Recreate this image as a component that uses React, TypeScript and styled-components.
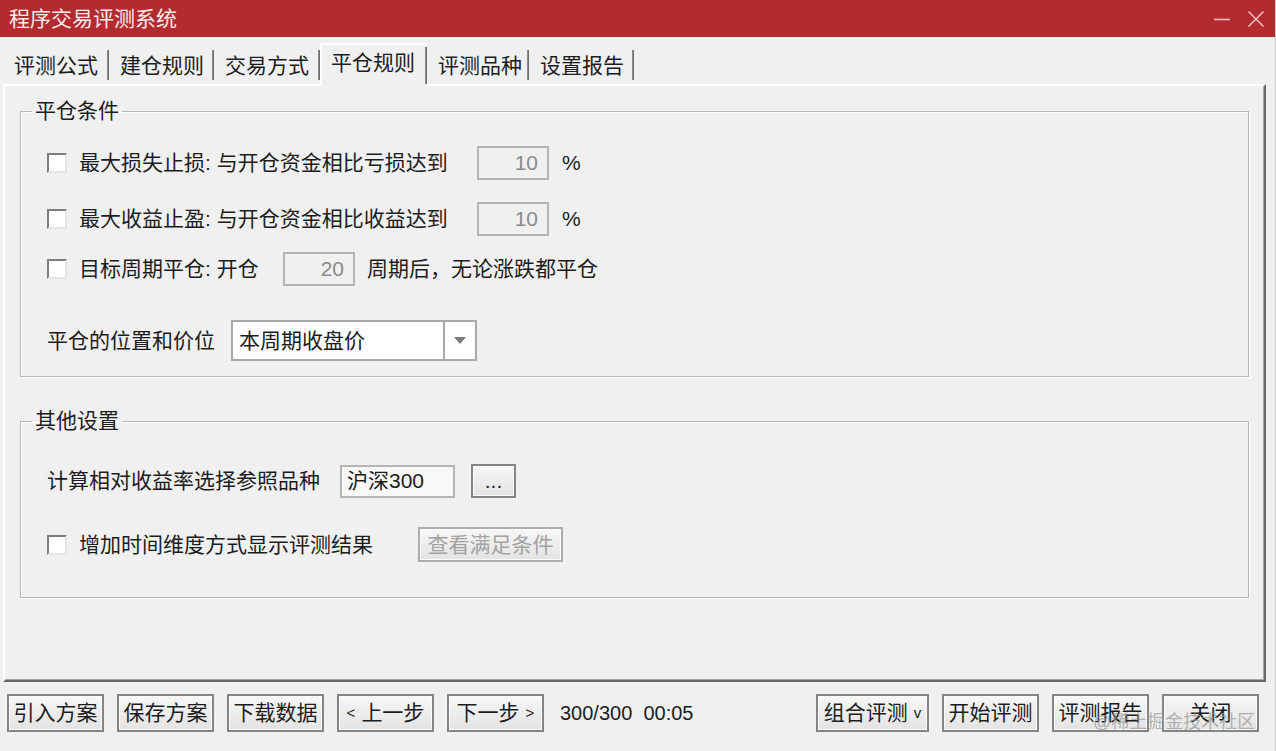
import React from "react";
import styled, { createGlobalStyle } from "styled-components";

const FONT = `"Liberation Sans", "Noto Sans CJK SC", sans-serif`;

const Global = createGlobalStyle`
  html, body { margin: 0; padding: 0; background: #f0f0f0; overflow: hidden; }
  body { font-family: ${FONT}; }
  * { box-sizing: border-box; }
`;

const Window = styled.div`
  position: relative;
  width: 1276px;
  height: 751px;
  display: flex;
  flex-direction: column;
  background: #f0f0f0;
  font-family: ${FONT};
  font-size: 21px;
  line-height: 24px;
  color: #1c1c1c;
  border-right: 1px solid #c9c9c9;
  overflow: hidden;
`;

const TitleBar = styled.div`
  flex: none;
  height: 37px;
  display: flex;
  align-items: center;
  padding: 0 2px 0 9px;
  background: #b32b2f;
`;

const Title = styled.div`
  flex: 1;
  color: #fbeaea;
  font-size: 21px;
  line-height: 24px;
`;

const CaptionButton = styled.div`
  width: 34px;
  height: 37px;
  display: flex;
  align-items: center;
  justify-content: center;
`;

const TabStrip = styled.div`
  flex: none;
  height: 47px;
  display: flex;
  align-items: flex-end;
  padding-left: 3px;
  position: relative;
  z-index: 1;
`;

const Tab = styled.div<{ $w: number; $active?: boolean }>`
  width: ${(p) => p.$w}px;
  height: ${(p) => (p.$active ? 43 : 37)}px;
  margin-bottom: ${(p) => (p.$active ? -2 : 0)}px;
  padding: ${(p) => (p.$active ? "0 0 6px 9px" : "0 0 0 11px")};
  display: flex;
  align-items: center;
  white-space: nowrap;
  background: #f0f0f0;
  border-top: ${(p) => (p.$active ? "2px solid #ffffff" : "none")};
  border-left: ${(p) => (p.$active ? "2px solid #ffffff" : "none")};
  position: relative;
  &::after {
    content: "";
    position: absolute;
    right: 0;
    top: ${(p) => (p.$active ? 2 : 3)}px;
    bottom: ${(p) => (p.$active ? 2 : 4)}px;
    width: 2px;
    background: linear-gradient(to right, #9a9a9a, #5f5f5f);
  }
`;

const TabPanel = styled.div`
  flex: none;
  height: 598px;
  margin: 0 9px 0 3px;
  padding: 13px 15px 0 15px;
  border-top: 2px solid #ffffff;
  border-left: 2px solid #ffffff;
  border-right: 2px solid #6a6a6a;
  border-bottom: 2px solid #6a6a6a;
  box-shadow: inset -1px -1px 0 #a5a5a5;
  display: flex;
  flex-direction: column;
`;

const Group = styled.fieldset<{ $gap?: number; $pb: number }>`
  margin: ${(p) => p.$gap ?? 0}px 0 0 0;
  padding: 0 0 ${(p) => p.$pb}px 26px;
  border: 1px solid #b5b5b5;
  box-shadow: inset 1px 1px 0 #ffffff, 1px 1px 0 #ffffff;
  min-width: 0;
`;

const Legend = styled.legend`
  margin-left: -15px;
  padding: 0 3px;
  font-size: 21px;
  line-height: 24px;
`;

const Row = styled.div<{ $mt: number; $h: number }>`
  margin-top: ${(p) => p.$mt}px;
  height: ${(p) => p.$h}px;
  display: flex;
  align-items: center;
  white-space: nowrap;
`;

const CheckBox = styled.span`
  flex: none;
  width: 20px;
  height: 20px;
  margin-right: 12px;
  background: #ffffff;
  border-style: solid;
  border-width: 2px;
  border-color: #7d7d7d #e4e4e4 #e4e4e4 #7d7d7d;
`;

const Label = styled.span<{ $w?: number }>`
  flex: none;
  width: ${(p) => (p.$w ? `${p.$w}px` : "auto")};
`;

const NumBox = styled.div`
  flex: none;
  width: 72px;
  height: 34px;
  padding-right: 9px;
  display: flex;
  align-items: center;
  justify-content: flex-end;
  background: #f0f0f0;
  border: 2px solid #b4b4b4;
  color: #8a8a8a;
`;

const Unit = styled.span<{ $ml: number }>`
  margin-left: ${(p) => p.$ml}px;
`;

const Select = styled.div`
  flex: none;
  width: 246px;
  height: 41px;
  display: flex;
  background: #ffffff;
  border: 2px solid #a9a9a9;
`;

const SelectValue = styled.div`
  flex: 1;
  padding-left: 6px;
  display: flex;
  align-items: center;
`;

const SelectArrow = styled.div`
  flex: none;
  width: 32px;
  display: flex;
  align-items: center;
  justify-content: center;
  border-left: 2px solid #a9a9a9;
`;

const TextBox = styled.div`
  flex: none;
  width: 115px;
  height: 33px;
  padding-left: 5px;
  display: flex;
  align-items: center;
  background: #f8f8f8;
  border: 2px solid #b4b4b4;
`;

const Button = styled.div<{ $w: number; $h?: number; $ml?: number; $disabled?: boolean }>`
  flex: none;
  width: ${(p) => p.$w}px;
  height: ${(p) => p.$h ?? 38}px;
  margin-left: ${(p) => p.$ml ?? 0}px;
  display: flex;
  align-items: center;
  justify-content: center;
  white-space: nowrap;
  background: linear-gradient(#f7f7f7, #e3e3e3);
  border: 2px solid ${(p) => (p.$disabled ? "#adadad" : "#848484")};
  box-shadow: inset 0 0 0 1px #fbfbfb;
  color: ${(p) => (p.$disabled ? "#a2a2a2" : "#1c1c1c")};
`;

const Small = styled.span<{ $side: "l" | "r" }>`
  font-size: 15px;
  margin: ${(p) => (p.$side === "l" ? "0 6px 0 0" : "0 0 0 6px")};
`;

const Footer = styled.div`
  flex: 1;
  display: flex;
  align-items: flex-start;
  padding: 12px 16px 0 7px;
`;

const ButtonGroup = styled.div<{ $push?: boolean }>`
  display: flex;
  align-items: center;
  gap: 13px;
  margin-left: ${(p) => (p.$push ? "auto" : "0")};
`;

const Status = styled.span`
  height: 38px;
  margin-left: 16px;
  display: flex;
  align-items: center;
  font-size: 20px;
  white-space: pre;
`;

const Watermark = styled.div`
  position: absolute;
  left: 1093px;
  top: 710px;
  font-size: 18px;
  line-height: 24px;
  color: rgba(150, 150, 150, 0.7);
  white-space: nowrap;
  pointer-events: none;
`;

const tabs = [
  { t: "评测公式", w: 106 },
  { t: "建仓规则", w: 105 },
  { t: "交易方式", w: 106 },
  { t: "平仓规则", w: 107, active: true },
  { t: "评测品种", w: 102 },
  { t: "设置报告", w: 105 },
];

export default function App() {
  return (
    <>
      <Global />
      <Window>
        <TitleBar>
          <Title>程序交易评测系统</Title>
          <CaptionButton>
            <svg width="18" height="18" viewBox="0 0 18 18">
              <line x1="1" y1="9.5" x2="17" y2="9.5" stroke="#f1bcbc" strokeWidth="1.6" />
            </svg>
          </CaptionButton>
          <CaptionButton>
            <svg width="18" height="18" viewBox="0 0 18 18">
              <path d="M1.5 1.5 L16.5 16.5 M16.5 1.5 L1.5 16.5" stroke="#f1bcbc" strokeWidth="1.6" fill="none" />
            </svg>
          </CaptionButton>
        </TitleBar>

        <TabStrip>
          {tabs.map((t) => (
            <Tab key={t.t} $w={t.w} $active={t.active}>
              {t.t}
            </Tab>
          ))}
        </TabStrip>

        <TabPanel>
          <Group $pb={15}>
            <Legend>平仓条件</Legend>
            <Row $mt={23} $h={34}>
              <CheckBox />
              <Label $w={398}>最大损失止损: 与开仓资金相比亏损达到</Label>
              <NumBox>10</NumBox>
              <Unit $ml={13}>%</Unit>
            </Row>
            <Row $mt={22} $h={34}>
              <CheckBox />
              <Label $w={398}>最大收益止盈: 与开仓资金相比收益达到</Label>
              <NumBox>10</NumBox>
              <Unit $ml={13}>%</Unit>
            </Row>
            <Row $mt={16} $h={34}>
              <CheckBox />
              <Label $w={204}>目标周期平仓: 开仓</Label>
              <NumBox>20</NumBox>
              <Unit $ml={12}>周期后，无论涨跌都平仓</Unit>
            </Row>
            <Row $mt={34} $h={41}>
              <Label $w={184}>平仓的位置和价位</Label>
              <Select>
                <SelectValue>本周期收盘价</SelectValue>
                <SelectArrow>
                  <svg width="12" height="7" viewBox="0 0 12 7">
                    <path d="M0 0 L12 0 L6 7 Z" fill="#7b7b7b" />
                  </svg>
                </SelectArrow>
              </Select>
            </Row>
          </Group>

          <Group $gap={32} $pb={35}>
            <Legend>其他设置</Legend>
            <Row $mt={31} $h={34}>
              <Label $w={293}>计算相对收益率选择参照品种</Label>
              <TextBox>沪深300</TextBox>
              <Button $w={45} $h={34} $ml={16}>
                ...
              </Button>
            </Row>
            <Row $mt={29} $h={35}>
              <CheckBox />
              <Label $w={339}>增加时间维度方式显示评测结果</Label>
              <Button $w={145} $h={35} $disabled>
                查看满足条件
              </Button>
            </Row>
          </Group>
        </TabPanel>

        <Footer>
          <ButtonGroup>
            <Button $w={97}>引入方案</Button>
            <Button $w={97}>保存方案</Button>
            <Button $w={97}>下载数据</Button>
            <Button $w={97}>
              <Small $side="l">&lt;</Small>上一步
            </Button>
            <Button $w={97}>
              下一步<Small $side="r">&gt;</Small>
            </Button>
          </ButtonGroup>
          <Status>300/300  00:05</Status>
          <ButtonGroup $push>
            <Button $w={113}>
              组合评测<Small $side="r">v</Small>
            </Button>
            <Button $w={97}>开始评测</Button>
            <Button $w={97}>评测报告</Button>
            <Button $w={97}>关闭</Button>
          </ButtonGroup>
        </Footer>

        <Watermark>@稀土掘金技术社区</Watermark>
      </Window>
    </>
  );
}
